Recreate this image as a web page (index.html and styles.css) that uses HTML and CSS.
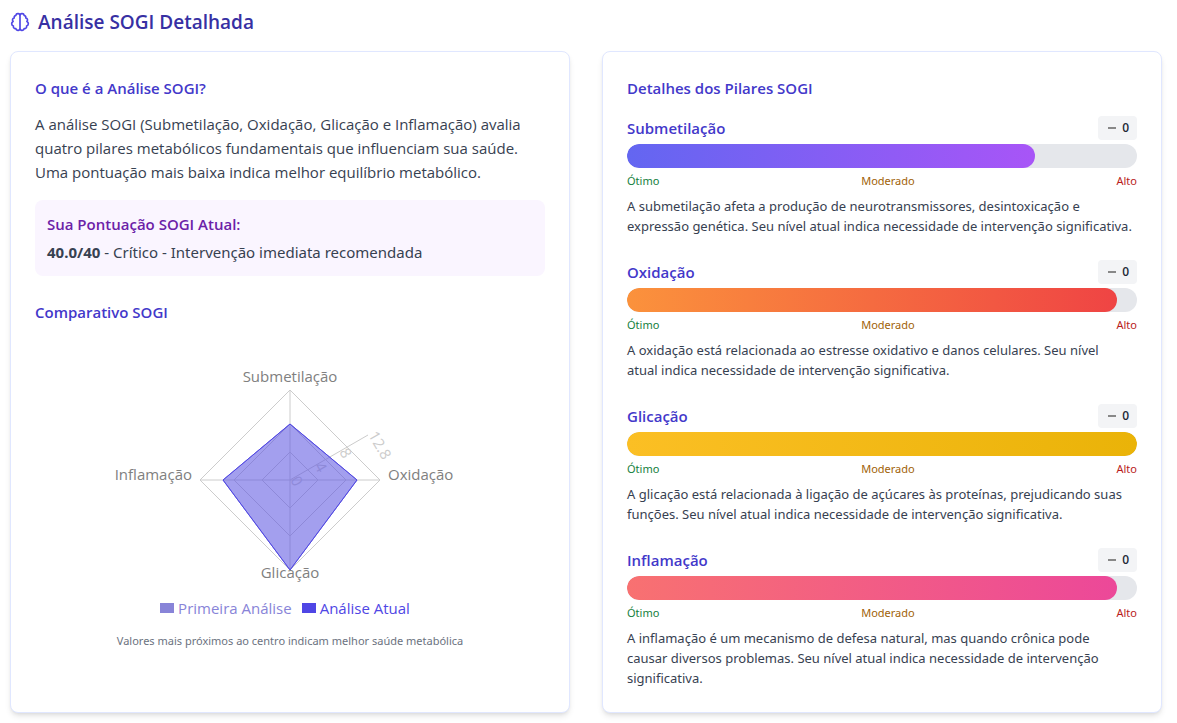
FILE: index.html
```html
<!DOCTYPE html>
<html lang="pt-BR">
<head>
<meta charset="utf-8">
<meta name="viewport" content="width=device-width, initial-scale=1">
<title>Análise SOGI Detalhada</title>
<link rel="stylesheet" href="styles.css">
</head>
<body>
<main class="page">
  <h1 class="page-title">
    <svg class="title-icon" viewBox="0 0 24 24" aria-hidden="true"><path d="M12 4.500v15M12 4.500a2.500 2.500 0 0 0-4.960-.46 2.500 2.500 0 0 0-1.980 3 2.500 2.500 0 0 0-1.320 4.240 3 3 0 0 0 .34 5.580 2.500 2.500 0 0 0 2.960 3.080 2.500 2.500 0 0 0 4.960-.44M12 4.500a2.500 2.500 0 0 1 4.960-.46 2.500 2.500 0 0 1 1.980 3 2.500 2.500 0 0 1 1.320 4.240 3 3 0 0 1-.34 5.580 2.500 2.500 0 0 1-2.960 3.080 2.500 2.500 0 0 1-4.960-.44"/></svg>
    Análise SOGI Detalhada
  </h1>
  <div class="columns">
    <section class="card">
      <h2 class="card-title">O que é a Análise SOGI?</h2>
      <p class="intro">A análise SOGI (Submetilação, Oxidação, Glicação e Inflamação) avalia quatro pilares metabólicos fundamentais que influenciam sua saúde. Uma pontuação mais baixa indica melhor equilíbrio metabólico.</p>
      <div class="score">
        <h3 class="score-title">Sua Pontuação SOGI Atual:</h3>
        <p class="score-text"><strong>40.0/40</strong> - Crítico - Intervenção imediata recomendada</p>
      </div>
      <h2 class="card-title chart-title">Comparativo SOGI</h2>
      <figure class="chart">
        <svg class="radar" viewBox="0 0 510 256" role="img" aria-label="Comparativo SOGI">
          <g class="grid">
            <path d="M255 54V234M165 144H345"/>
            <path d="M255 116L283 144L255 172L227 144ZM255 88L311 144L255 200L199 144ZM255 54L345 144L255 234L165 144Z"/>
            <path d="M255 144L333 99"/>
          </g>
          <g class="ticks">
            <text transform="translate(255 144) rotate(60)">0</text>
            <text transform="translate(279 130) rotate(60)">4</text>
            <text transform="translate(304 116) rotate(60)">8</text>
            <text transform="translate(333 99) rotate(60)">12.8</text>
          </g>
          <g class="axis-labels">
            <text x="255" y="46" text-anchor="middle">Submetilação</text>
            <text x="353" y="144">Oxidação</text>
            <text x="255" y="242" text-anchor="middle">Glicação</text>
            <text x="157" y="144" text-anchor="end">Inflamação</text>
          </g>
          <path class="series-first" d="M255 88L322 144L255 234L188 144Z"/>
          <path class="series-current" d="M255 88L322 144L255 234L188 144Z"/>
        </svg>
        <ul class="legend">
          <li class="legend-item legend-first">Primeira Análise</li>
          <li class="legend-item legend-current">Análise Atual</li>
        </ul>
        <figcaption class="caption">Valores mais próximos ao centro indicam melhor saúde metabólica</figcaption>
      </figure>
    </section>
    <section class="card">
      <h2 class="card-title">Detalhes dos Pilares SOGI</h2>
      <div class="pillars">
        <article class="pillar">
          <div class="pillar-head"><h3 class="pillar-name">Submetilação</h3><span class="badge"><svg class="minus" viewBox="0 0 12 12" aria-hidden="true"><path d="M2 6H10"/></svg>0</span></div>
          <div class="track"><div class="fill fill-indigo" style="width:80%"></div></div>
          <div class="scale"><span class="low">Ótimo</span><span class="mid">Moderado</span><span class="high">Alto</span></div>
          <p class="description">A submetilação afeta a produção de neurotransmissores, desintoxicação e expressão genética. Seu nível atual indica necessidade de intervenção significativa.</p>
        </article>
        <article class="pillar">
          <div class="pillar-head"><h3 class="pillar-name">Oxidação</h3><span class="badge"><svg class="minus" viewBox="0 0 12 12" aria-hidden="true"><path d="M2 6H10"/></svg>0</span></div>
          <div class="track"><div class="fill fill-orange" style="width:96%"></div></div>
          <div class="scale"><span class="low">Ótimo</span><span class="mid">Moderado</span><span class="high">Alto</span></div>
          <p class="description">A oxidação está relacionada ao estresse oxidativo e danos celulares. Seu nível<br> atual indica necessidade de intervenção significativa.</p>
        </article>
        <article class="pillar">
          <div class="pillar-head"><h3 class="pillar-name">Glicação</h3><span class="badge"><svg class="minus" viewBox="0 0 12 12" aria-hidden="true"><path d="M2 6H10"/></svg>0</span></div>
          <div class="track"><div class="fill fill-yellow" style="width:100%"></div></div>
          <div class="scale"><span class="low">Ótimo</span><span class="mid">Moderado</span><span class="high">Alto</span></div>
          <p class="description">A glicação está relacionada à ligação de açúcares às proteínas, prejudicando suas funções. Seu nível atual indica necessidade de intervenção significativa.</p>
        </article>
        <article class="pillar">
          <div class="pillar-head"><h3 class="pillar-name">Inflamação</h3><span class="badge"><svg class="minus" viewBox="0 0 12 12" aria-hidden="true"><path d="M2 6H10"/></svg>0</span></div>
          <div class="track"><div class="fill fill-pink" style="width:96%"></div></div>
          <div class="scale"><span class="low">Ótimo</span><span class="mid">Moderado</span><span class="high">Alto</span></div>
          <p class="description">A inflamação é um mecanismo de defesa natural, mas quando crônica pode<br> causar diversos problemas. Seu nível atual indica necessidade de intervenção significativa.</p>
        </article>
      </div>
    </section>
  </div>
</main>
</body>
</html>
```
FILE: styles.css
```css
* { box-sizing: border-box; margin: 0; padding: 0; }
body {
  background: #fff;
  color: #374151;
  font-family: "Open Sans", "Noto Sans", sans-serif;
  font-size: 15px;
  line-height: 24px;
}
.page { padding: 8px 15px 10px 10px; }
.page-title {
  display: flex;
  align-items: center;
  gap: 8px;
  margin-bottom: 15px;
  color: #3730a3;
  font-size: 19px;
  font-weight: 600;
  line-height: 28px;
}
.title-icon {
  width: 20px;
  height: 20px;
  fill: none;
  stroke: #4f46e5;
  stroke-width: 2;
  stroke-linecap: round;
  stroke-linejoin: round;
}
.columns { display: grid; grid-template-columns: 1fr 1fr; gap: 32px; }
.card {
  padding: 24px;
  border: 1px solid #e0e7ff;
  border-radius: 8px;
  background: #fff;
  box-shadow: 0 4px 6px -1px rgba(0, 0, 0, .1), 0 2px 4px -2px rgba(0, 0, 0, .1);
}
.card-title { color: #4338ca; font-size: 15px; font-weight: 600; }
.intro { margin-top: 12px; }
.score { margin-top: 16px; padding: 12px; border-radius: 8px; background: #faf5ff; }
.score-title { margin-bottom: 4px; color: #6b21a8; font-size: 15px; font-weight: 600; }
.score-text { font-family: "Noto Sans", "Open Sans", sans-serif; }
.chart-title { margin-top: 24px; }
.chart { margin-top: 12px; }
.radar { display: block; width: 100%; height: 256px; overflow: visible; }
.grid { fill: none; stroke: #ccc; }
.ticks { fill: #ccc; font-size: 15px; }
.axis-labels { fill: #808080; font-size: 15px; }
.series-first { fill: #8884d8; fill-opacity: .3; stroke: #8884d8; }
.series-current { fill: #4f46e5; fill-opacity: .4; stroke: #4f46e5; }
.legend { display: flex; justify-content: center; margin-top: 4px; list-style: none; }
.legend-item { display: flex; align-items: center; gap: 4px; margin-right: 10px; }
.legend-item::before { content: ""; width: 14px; height: 10px; background: currentColor; }
.legend-first { color: #8884d8; }
.legend-current { color: #4f46e5; }
.caption {
  margin-top: 12px;
  color: #6b7280;
  font-family: "Noto Sans", "Open Sans", sans-serif;
  font-size: 11px;
  line-height: 18px;
  text-align: center;
}
.pillars { display: grid; gap: 24px; margin-top: 16px; }
.pillar-head { display: flex; align-items: center; justify-content: space-between; margin-bottom: 4px; }
.pillar-name { color: #4338ca; font-size: 15px; font-weight: 600; }
.badge {
  display: flex;
  align-items: center;
  gap: 4px;
  padding: 4px 8px;
  border-radius: 4px;
  background: #f3f4f6;
  color: #1f2937;
  font-size: 12px;
  font-weight: 600;
  line-height: 16px;
}
.minus { width: 12px; height: 12px; fill: none; stroke: #888; stroke-width: 2; }
.track { height: 24px; overflow: hidden; border-radius: 12px; background: #e5e7eb; }
.fill { height: 100%; border-radius: 12px; }
.fill-indigo { background: linear-gradient(90deg, #6366f1, #a855f7); }
.fill-orange { background: linear-gradient(90deg, #fb923c, #ef4444); }
.fill-yellow { background: linear-gradient(90deg, #fbbf24, #eab308); }
.fill-pink { background: linear-gradient(90deg, #f87171, #ec4899); }
.scale {
  display: flex;
  justify-content: space-between;
  margin-top: 4px;
  font-family: "Noto Sans", "Open Sans", sans-serif;
  font-size: 11px;
  line-height: 18px;
}
.low { color: #15803d; }
.mid { color: #a16207; }
.high { color: #b91c1c; }
.description {
  margin-top: 6px;
  font-family: "Noto Sans", "Open Sans", sans-serif;
  font-size: 13px;
  line-height: 20px;
}
@media (max-width: 800px) {
  .columns { grid-template-columns: 1fr; }
}
```
